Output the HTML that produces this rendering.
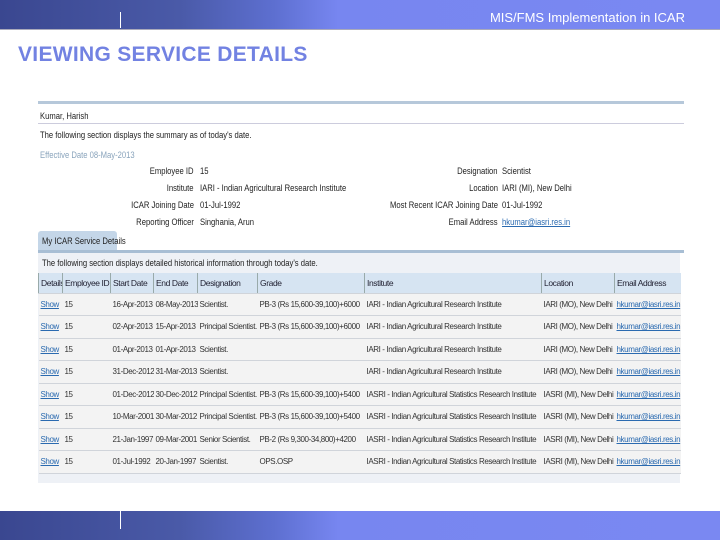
<!DOCTYPE html>
<html><head><meta charset="utf-8"><style>
*{margin:0;padding:0;box-sizing:border-box}
body{width:720px;height:540px;position:relative;background:#fff;font-family:"Liberation Sans",sans-serif;overflow:hidden}
.band{position:absolute;left:0;width:720px;height:29px;background:linear-gradient(90deg,#3a4790 0%,#4a5aa8 25%,#5d6fd0 38%,#7786f0 47%,#7a88f2 100%)}
.hdr{position:absolute;right:35px;top:10px;color:#fff;font-size:13px}
h1{position:absolute;left:18px;top:43px;font-size:21px;font-weight:bold;color:#7282e2;letter-spacing:0.3px}
.s{position:absolute;font-size:9px;color:#222;white-space:nowrap;transform:scaleX(.85);transform-origin:left}
.r{text-align:right;transform-origin:right}
table{position:absolute;left:38px;top:273px;width:642px;border-collapse:collapse;font-size:8px;table-layout:fixed;letter-spacing:-0.4px}
td,th{height:22.5px;white-space:nowrap;overflow:hidden;padding-left:2px;text-align:left;font-weight:normal;border-bottom:1px solid #d0d4da}
th{background:#d6e4f2;height:20px;border-left:1px solid #9aa;color:#223;font-size:8.5px}
tr.d td{background:#f3f3f3;color:#333}
a{color:#2a6ab0;text-decoration:underline}
</style></head><body>
<div class="band" style="top:0"></div>
<div style="position:absolute;left:120px;top:12px;width:1px;height:16px;background:#fff"></div>
<div class="hdr">MIS/FMS Implementation in ICAR</div>
<div style="position:absolute;left:0;top:29px;width:720px;height:1px;background:#aab"></div>
<h1>VIEWING SERVICE DETAILS</h1>
<div style="position:absolute;left:38px;top:101px;width:646px;height:3px;background:#b6c8da"></div>
<div class="s" style="left:40px;top:111px">Kumar, Harish</div>
<div style="position:absolute;left:38px;top:123px;width:646px;height:1px;background:#ccd"></div>
<div class="s" style="left:40px;top:130px">The following section displays the summary as of today's date.</div>
<div class="s" style="left:40px;top:150px;color:#8aa4bc">Effective Date 08-May-2013</div>
<div class="s r" style="right:526px;top:166px">Employee ID</div><div class="s" style="left:200px;top:166px">15</div>
<div class="s r" style="right:526px;top:183px">Institute</div><div class="s" style="left:200px;top:183px">IARI - Indian Agricultural Research Institute</div>
<div class="s r" style="right:526px;top:200px">ICAR Joining Date</div><div class="s" style="left:200px;top:200px">01-Jul-1992</div>
<div class="s r" style="right:526px;top:217px">Reporting Officer</div><div class="s" style="left:200px;top:217px">Singhania, Arun</div>
<div class="s r" style="right:222px;top:166px">Designation</div><div class="s" style="left:502px;top:166px">Scientist</div>
<div class="s r" style="right:222px;top:183px">Location</div><div class="s" style="left:502px;top:183px">IARI (MI), New Delhi</div>
<div class="s r" style="right:222px;top:200px">Most Recent ICAR Joining Date</div><div class="s" style="left:502px;top:200px">01-Jul-1992</div>
<div class="s r" style="right:222px;top:217px">Email Address</div><div class="s" style="left:502px;top:217px"><a>hkumar@iasri.res.in</a></div>
<div style="position:absolute;left:38px;top:231px;width:79px;height:20px;background:#c4d6e8;border-radius:3px 3px 0 0"></div>
<div class="s" style="left:42px;top:236px">My ICAR Service Details</div>
<div style="position:absolute;left:38px;top:250px;width:646px;height:3px;background:#a8bed4"></div>
<div style="position:absolute;left:38px;top:253px;width:642px;height:230px;background:#eef1f6"></div>
<div class="s" style="left:42px;top:258px">The following section displays detailed historical information through today's date.</div>
<table>
<colgroup><col style="width:24px"><col style="width:48px"><col style="width:43px"><col style="width:44px"><col style="width:60px"><col style="width:107px"><col style="width:177px"><col style="width:73px"><col style="width:66px"></colgroup>
<tr><th>Details</th><th>Employee ID</th><th>Start Date</th><th>End Date</th><th>Designation</th><th>Grade</th><th>Institute</th><th>Location</th><th>Email Address</th></tr>
<tr class="d"><td><a>Show</a></td><td>15</td><td>16-Apr-2013</td><td>08-May-2013</td><td>Scientist.</td><td>PB-3 (Rs 15,600-39,100)+6000</td><td>IARI - Indian Agricultural Research Institute</td><td>IARI (MO), New Delhi</td><td><a>hkumar@iasri.res.in</a></td></tr>
<tr class="d"><td><a>Show</a></td><td>15</td><td>02-Apr-2013</td><td>15-Apr-2013</td><td>Principal Scientist.</td><td>PB-3 (Rs 15,600-39,100)+6000</td><td>IARI - Indian Agricultural Research Institute</td><td>IARI (MO), New Delhi</td><td><a>hkumar@iasri.res.in</a></td></tr>
<tr class="d"><td><a>Show</a></td><td>15</td><td>01-Apr-2013</td><td>01-Apr-2013</td><td>Scientist.</td><td></td><td>IARI - Indian Agricultural Research Institute</td><td>IARI (MO), New Delhi</td><td><a>hkumar@iasri.res.in</a></td></tr>
<tr class="d"><td><a>Show</a></td><td>15</td><td>31-Dec-2012</td><td>31-Mar-2013</td><td>Scientist.</td><td></td><td>IARI - Indian Agricultural Research Institute</td><td>IARI (MO), New Delhi</td><td><a>hkumar@iasri.res.in</a></td></tr>
<tr class="d"><td><a>Show</a></td><td>15</td><td>01-Dec-2012</td><td>30-Dec-2012</td><td>Principal Scientist.</td><td>PB-3 (Rs 15,600-39,100)+5400</td><td>IASRI - Indian Agricultural Statistics Research Institute</td><td>IASRI (MI), New Delhi</td><td><a>hkumar@iasri.res.in</a></td></tr>
<tr class="d"><td><a>Show</a></td><td>15</td><td>10-Mar-2001</td><td>30-Mar-2012</td><td>Principal Scientist.</td><td>PB-3 (Rs 15,600-39,100)+5400</td><td>IASRI - Indian Agricultural Statistics Research Institute</td><td>IASRI (MI), New Delhi</td><td><a>hkumar@iasri.res.in</a></td></tr>
<tr class="d"><td><a>Show</a></td><td>15</td><td>21-Jan-1997</td><td>09-Mar-2001</td><td>Senior Scientist.</td><td>PB-2 (Rs 9,300-34,800)+4200</td><td>IASRI - Indian Agricultural Statistics Research Institute</td><td>IASRI (MI), New Delhi</td><td><a>hkumar@iasri.res.in</a></td></tr>
<tr class="d"><td><a>Show</a></td><td>15</td><td>01-Jul-1992</td><td>20-Jan-1997</td><td>Scientist.</td><td>OPS.OSP</td><td>IASRI - Indian Agricultural Statistics Research Institute</td><td>IASRI (MI), New Delhi</td><td><a>hkumar@iasri.res.in</a></td></tr>
</table>
<div class="band" style="top:511px"></div>
<div style="position:absolute;left:120px;top:511px;width:1px;height:18px;background:#fff"></div>
</body></html>
